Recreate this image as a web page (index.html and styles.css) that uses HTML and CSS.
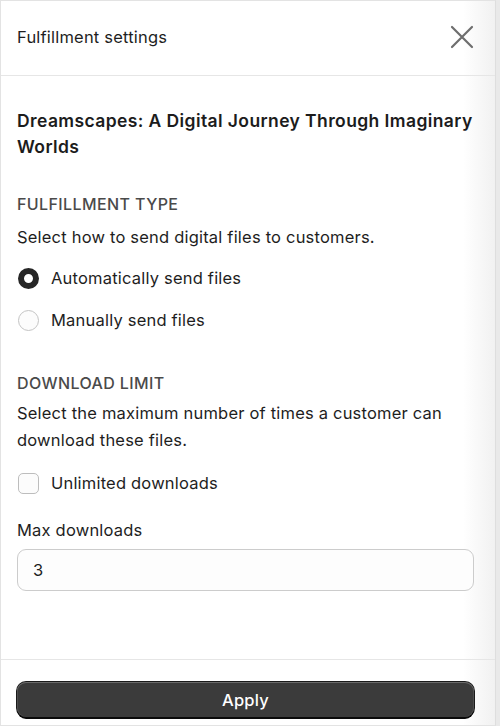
FILE: index.html
```html
<!DOCTYPE html>
<html lang="en">
<head>
<meta charset="utf-8">
<title>Fulfillment settings</title>
<link rel="stylesheet" href="styles.css">
</head>
<body>
<div class="panel">
  <header class="panel-header">
    <h1 class="panel-title">Fulfillment settings</h1>
    <button class="close-btn" aria-label="Close">
      <svg viewBox="0 0 24 24" width="24" height="24"><path d="M2 2 L22 22 M22 2 L2 22" stroke="#6e6e6e" stroke-width="2.2" stroke-linecap="round" fill="none"/></svg>
    </button>
  </header>
  <main class="panel-body">
    <h2 class="product-title">Dreamscapes: A Digital Journey Through Imaginary Worlds</h2>

    <h3 class="section-heading first">Fulfillment type</h3>
    <p class="section-desc">Select how to send digital files to customers.</p>
    <div class="radio-list">
      <label class="choice"><span class="radio checked"></span><span class="choice-text">Automatically send files</span></label>
      <label class="choice"><span class="radio"></span><span class="choice-text">Manually send files</span></label>
    </div>

    <h3 class="section-heading second">Download limit</h3>
    <p class="section-desc wrap">Select the maximum number of times a customer can download these files.</p>
    <label class="choice check-row"><span class="checkbox"></span><span class="choice-text">Unlimited downloads</span></label>

    <div class="field-label">Max downloads</div>
    <div class="text-input">3</div>
  </main>
  <footer class="panel-footer">
    <button class="apply-btn">Apply</button>
  </footer>
</div>
</body>
</html>
```

FILE: styles.css
```css
* { box-sizing: border-box; }
html, body { margin: 0; padding: 0; }
body {
  background: #e9e9e9;
  font-family: Inter, "Noto Sans", "Liberation Sans", sans-serif;
  color: #1c1c1c;
  width: 500px;
  height: 726px;
  overflow: hidden;
}
.panel {
  width: 496px;
  height: 726px;
  display: flex;
  flex-direction: column;
  border-top: 1px solid #e3e3e3;
  border-left: 1px solid #e3e3e3;
  border-right: 1px solid #dedede;
  border-bottom: 1px solid #e3e3e3;
  background: linear-gradient(to right, #ffffff 0, #ffffff 462px, #f1f1f1 494px);
}
.panel-header {
  height: 75px;
  flex: none;
  display: flex;
  align-items: center;
  justify-content: space-between;
  padding: 0 21px 3px 16px;
  border-bottom: 1px solid #e6e6e6;
}
.panel-title {
  margin: 0;
  font-size: 16.5px;
  letter-spacing: 0.2px;
  font-weight: 400;
  color: #1e1e1e;
}
.close-btn {
  border: 0;
  background: none;
  padding: 0;
  width: 24px;
  height: 24px;
  display: flex;
}
.panel-body {
  flex: 1;
  padding: 32px 21px 0 16px;
}
.product-title {
  margin: 0;
  font-size: 17.5px;
  letter-spacing: 0.4px;
  line-height: 26px;
  font-weight: 600;
  color: #1c1c1c;
}
.section-heading {
  margin: 0;
  font-size: 16px;
  line-height: 22px;
  font-weight: 500;
  text-transform: uppercase;
  letter-spacing: 0.4px;
  color: #4a4a4a;
}
.section-heading.first { margin-top: 33px; }
.section-heading.second { margin-top: 31px; }
.section-desc {
  margin: 9px 0 0;
  font-size: 16.5px;
  letter-spacing: 0.2px;
  line-height: 26px;
  color: #1e1e1e;
}
.section-desc.wrap {
  margin-top: 6px;
  line-height: 27px;
  padding-right: 20px;
}
.radio-list { margin-top: 7px; }
.choice {
  display: flex;
  align-items: center;
  height: 42px;
  gap: 12px;
  font-size: 16.5px;
  letter-spacing: 0.2px;
  color: #1e1e1e;
}
.choice-text { line-height: 22px; }
.radio {
  width: 21px;
  height: 21px;
  margin-left: 1px;
  border-radius: 50%;
  border: 1px solid #c4c4c4;
  background: #fcfcfc;
  flex: none;
}
.radio.checked {
  border: 6px solid #262626;
  background: #ffffff;
}
.check-row { margin-top: 8px; }
.checkbox {
  width: 21px;
  height: 21px;
  margin-left: 1px;
  border-radius: 5px;
  border: 1px solid #bdbdbd;
  background: #fcfcfc;
  flex: none;
}
.field-label {
  margin-top: 15px;
  font-size: 16.5px;
  letter-spacing: 0.2px;
  line-height: 22px;
  color: #1e1e1e;
}
.text-input {
  margin-top: 8px;
  height: 42px;
  border: 1px solid #cccccc;
  border-radius: 9px;
  background: #fdfdfd;
  padding: 0 15px;
  display: flex;
  align-items: center;
  font-size: 16.5px;
  color: #1e1e1e;
}
.panel-footer {
  height: 66px;
  flex: none;
  border-top: 1px solid #e6e6e6;
  padding: 22px 21px 0 16px;
}
.apply-btn {
  width: 100%;
  height: 35px;
  border: 0;
  border-radius: 9px;
  background: #3b3b3b;
  color: #ffffff;
  font-family: inherit;
  font-size: 16.5px;
  letter-spacing: 0.2px;
  font-weight: 500;
  box-shadow: inset 0 1px 0 #6a6a6a, inset 1px 0 0 #4e4e4e, inset -1px 0 0 #4e4e4e, 0 2px 0 #0a0a0a, 0 0 0 1px #1a1a1a;
  padding: 0;
}
```
